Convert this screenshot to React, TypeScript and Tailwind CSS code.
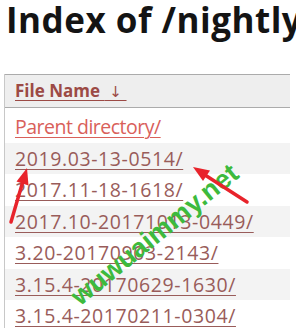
import React from 'react';

const rows = [
  { name: 'Parent directory/', fresh: true },
  { name: '2019.03-13-0514/' },
  { name: '2017.11-18-1618/' },
  { name: '2017.10-20171013-0449/' },
  { name: '3.20-20170903-2143/' },
  { name: '3.15.4-20170629-1630/' },
  { name: '3.15.4-20170211-0304/' },
];

export default function App() {
  return (
    <div className="relative w-[296px] h-[328px] overflow-hidden bg-white font-['Open_Sans',sans-serif]">
      <h1 className="pl-[6px] h-[74px] text-[35px] leading-[40px] tracking-[0.5px] font-bold text-[#141414] whitespace-nowrap">
        Index of /nightly/
      </h1>

      {/* listing */}
      <div className="ml-[4px] w-[286px] border-l border-[#c8c8c8]">
        <div className="h-[34px] bg-[#eeeeee] border-y border-[#ababab] pl-[10px] text-[17px] leading-[32px] font-bold text-[#9c4a45]">
          <span className="underline decoration-1 underline-offset-[3px]">
            File Name <span className="font-['DejaVu_Sans',sans-serif] font-normal text-[15px]">&nbsp;↓&nbsp;</span>
          </span>
        </div>
        <div className="pt-[3px]">
          {rows.map((r, i) => (
            <div
              key={r.name}
              className={`h-[31.5px] pl-[10px] text-[19.5px] leading-[31.5px] whitespace-nowrap ${i % 2 === 1 ? 'bg-[#f3f3f3]' : ''}`}
            >
              <span
                className={`underline decoration-1 underline-offset-[3px] ${
                  r.fresh ? 'text-[#d9605a] tracking-[-0.5px]' : 'text-[#995c5a] tracking-[0.6px]'
                }`}
              >
                {r.name}
              </span>
            </div>
          ))}
        </div>
      </div>

      {/* watermark */}
      <div className="absolute left-[155px] top-[235px] -translate-x-1/2 -translate-y-1/2 -rotate-[39deg] whitespace-nowrap text-[27px] leading-none font-semibold text-[#3dba3d] font-['Liberation_Sans',sans-serif]">
        wuwuaimmy.net
      </div>

      {/* red annotation arrows */}
      <svg className="absolute inset-0 pointer-events-none" width="296" height="328" viewBox="0 0 296 328">
        <line x1="11" y1="222" x2="23" y2="181" stroke="#e8232b" strokeWidth="3.5" strokeLinecap="round" />
        <polygon points="27,168 28.5,185.5 16.5,181.5" fill="#e8232b" />
        <line x1="247" y1="202" x2="205" y2="175" stroke="#e8232b" strokeWidth="3.5" strokeLinecap="round" />
        <polygon points="193,167 210,170.5 203,181" fill="#e8232b" />
      </svg>
    </div>
  );
}
